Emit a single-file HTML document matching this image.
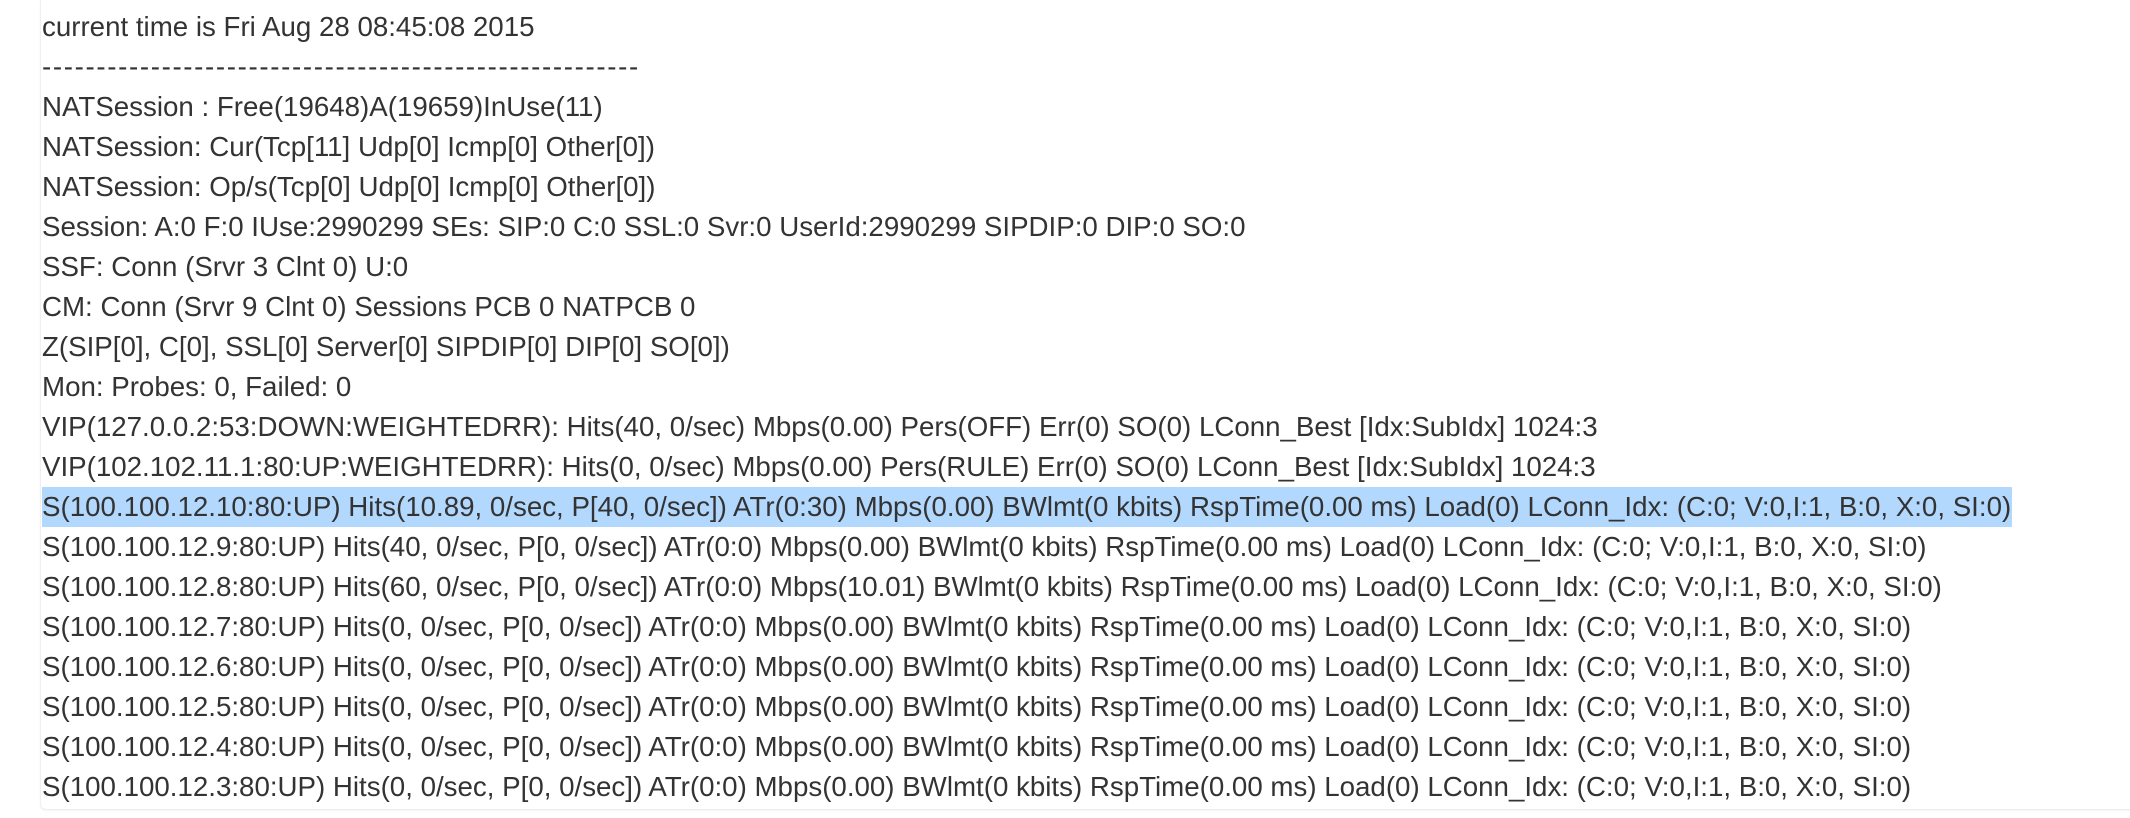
<!DOCTYPE html>
<html><head><meta charset="utf-8"><style>
html,body{margin:0;padding:0;background:#fff;width:2130px;height:818px;overflow:hidden}
.box{position:absolute;left:40px;top:0;width:2100px;height:809px;border-left:1px solid #f0f0f0;border-bottom:1px solid #ececec;border-radius:0 0 0 6px;box-shadow:0 1px 2px rgba(0,0,0,0.04)}
.t{position:absolute;left:42px;top:7px;font-family:"Liberation Sans",Arial,sans-serif;font-size:27.7px;line-height:40px;color:#333;white-space:nowrap}
.t div{height:40px}
.hl{background:#b3d8fd;display:inline-block;height:40px;width:1970px}
.d{letter-spacing:1.65px}
</style></head><body>
<div class="box"></div>
<div class="t"><div>current time is Fri Aug 28 08:45:08 2015</div><div class="d">-------------------------------------------------------</div><div>NATSession : Free(19648)A(19659)InUse(11)</div><div>NATSession: Cur(Tcp[11] Udp[0] Icmp[0] Other[0])</div><div>NATSession: Op/s(Tcp[0] Udp[0] Icmp[0] Other[0])</div><div>Session: A:0 F:0 IUse:2990299 SEs: SIP:0 C:0 SSL:0 Svr:0 UserId:2990299 SIPDIP:0 DIP:0 SO:0</div><div>SSF: Conn (Srvr 3 Clnt 0) U:0</div><div>CM: Conn (Srvr 9 Clnt 0) Sessions PCB 0 NATPCB 0</div><div>Z(SIP[0], C[0], SSL[0] Server[0] SIPDIP[0] DIP[0] SO[0])</div><div>Mon: Probes: 0, Failed: 0</div><div>VIP(127.0.0.2:53:DOWN:WEIGHTEDRR): Hits(40, 0/sec) Mbps(0.00) Pers(OFF) Err(0) SO(0) LConn_Best [Idx:SubIdx] 1024:3</div><div>VIP(102.102.11.1:80:UP:WEIGHTEDRR): Hits(0, 0/sec) Mbps(0.00) Pers(RULE) Err(0) SO(0) LConn_Best [Idx:SubIdx] 1024:3</div><div><span class="hl">S(100.100.12.10:80:UP) Hits(10.89, 0/sec, P[40, 0/sec]) ATr(0:30) Mbps(0.00) BWlmt(0 kbits) RspTime(0.00 ms) Load(0) LConn_Idx: (C:0; V:0,I:1, B:0, X:0, SI:0)</span></div><div>S(100.100.12.9:80:UP) Hits(40, 0/sec, P[0, 0/sec]) ATr(0:0) Mbps(0.00) BWlmt(0 kbits) RspTime(0.00 ms) Load(0) LConn_Idx: (C:0; V:0,I:1, B:0, X:0, SI:0)</div><div>S(100.100.12.8:80:UP) Hits(60, 0/sec, P[0, 0/sec]) ATr(0:0) Mbps(10.01) BWlmt(0 kbits) RspTime(0.00 ms) Load(0) LConn_Idx: (C:0; V:0,I:1, B:0, X:0, SI:0)</div><div>S(100.100.12.7:80:UP) Hits(0, 0/sec, P[0, 0/sec]) ATr(0:0) Mbps(0.00) BWlmt(0 kbits) RspTime(0.00 ms) Load(0) LConn_Idx: (C:0; V:0,I:1, B:0, X:0, SI:0)</div><div>S(100.100.12.6:80:UP) Hits(0, 0/sec, P[0, 0/sec]) ATr(0:0) Mbps(0.00) BWlmt(0 kbits) RspTime(0.00 ms) Load(0) LConn_Idx: (C:0; V:0,I:1, B:0, X:0, SI:0)</div><div>S(100.100.12.5:80:UP) Hits(0, 0/sec, P[0, 0/sec]) ATr(0:0) Mbps(0.00) BWlmt(0 kbits) RspTime(0.00 ms) Load(0) LConn_Idx: (C:0; V:0,I:1, B:0, X:0, SI:0)</div><div>S(100.100.12.4:80:UP) Hits(0, 0/sec, P[0, 0/sec]) ATr(0:0) Mbps(0.00) BWlmt(0 kbits) RspTime(0.00 ms) Load(0) LConn_Idx: (C:0; V:0,I:1, B:0, X:0, SI:0)</div><div>S(100.100.12.3:80:UP) Hits(0, 0/sec, P[0, 0/sec]) ATr(0:0) Mbps(0.00) BWlmt(0 kbits) RspTime(0.00 ms) Load(0) LConn_Idx: (C:0; V:0,I:1, B:0, X:0, SI:0)</div></div>
</body></html>
